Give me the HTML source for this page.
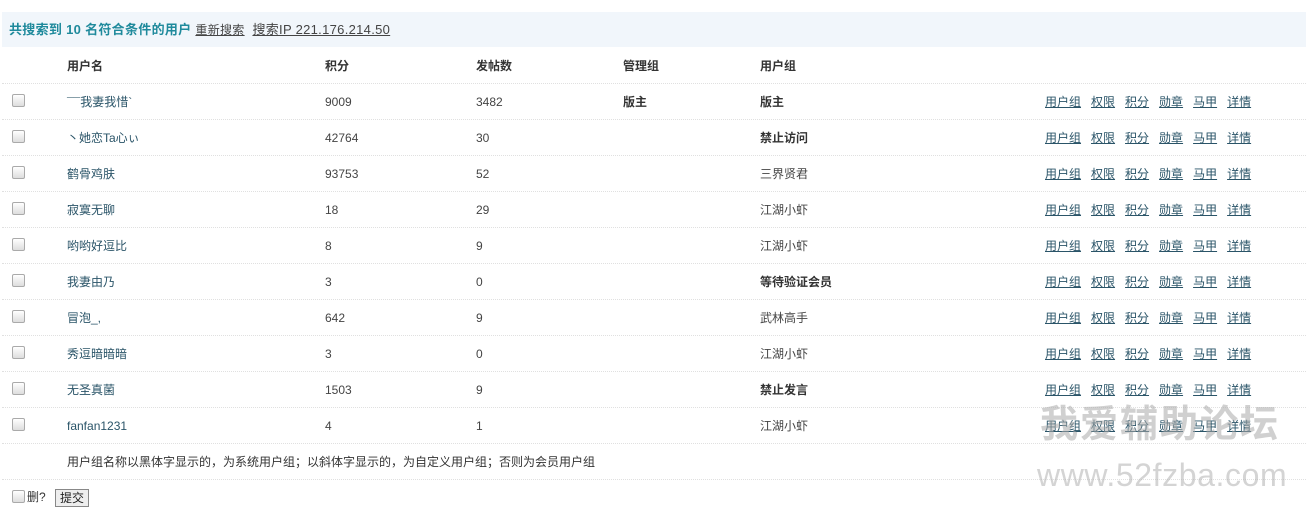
<!DOCTYPE html>
<html><head><meta charset="utf-8"><style>
body{margin:0;width:1306px;height:514px;background:#fff;font-family:"Liberation Sans","Noto Sans CJK SC",sans-serif;font-size:12px;color:#444;position:relative;overflow:hidden}
.a{position:absolute;white-space:nowrap;line-height:14px}
.hd{position:absolute;left:2px;top:12px;width:1304px;height:35px;background:#f1f6fb}
.ln{position:absolute;left:2px;width:1304px;height:0;border-top:1px dotted #e0e0e0}
.cb{position:absolute;left:12px;width:11px;height:11px;border:1px solid #aaa;border-radius:2px;background:linear-gradient(#fff,#ddd)}
.nm{color:#2a5468}
b{color:#333}
.act a{color:#2a5468;text-decoration:underline;margin-right:10px}
</style></head><body>
<div class="hd"></div>
<div class="a" style="left:9px;top:22px;font-size:13px;line-height:16px;letter-spacing:0.3px"><b style="color:#1f8a9c">共搜索到 10 名符合条件的用户</b> <span style="text-decoration:underline;color:#444;font-size:12px">重新搜索</span> &nbsp;<span style="text-decoration:underline;color:#444">搜索IP 221.176.214.50</span></div>
<div class="a" style="left:67px;top:59px"><b>用户名</b></div>
<div class="a" style="left:325px;top:59px"><b>积分</b></div>
<div class="a" style="left:476px;top:59px"><b>发帖数</b></div>
<div class="a" style="left:623px;top:59px"><b>管理组</b></div>
<div class="a" style="left:760px;top:59px"><b>用户组</b></div>
<div class="ln" style="top:83px"></div>
<div id="rows"></div>
<script>
var d=[["¯¯我妻我惜`","9009","3482","<b>版主</b>","<b>版主</b>"],
["丶她恋Ta心ぃ","42764","30","","<b>禁止访问</b>"],
["鹤骨鸡肤","93753","52","","三界贤君"],
["寂寞无聊","18","29","","江湖小虾"],
["哟哟好逗比","8","9","","江湖小虾"],
["我妻由乃","3","0","","<b>等待验证会员</b>"],
["冒泡_,","642","9","","武林高手"],
["秀逗暗暗暗","3","0","","江湖小虾"],
["无圣真菌","1503","9","","<b>禁止发言</b>"],
["fanfan1231","4","1","","江湖小虾"]];
var h="";
d.forEach(function(r,i){var y=84+i*36;var t=y+11;
h+='<div class="cb" style="top:'+(y+10)+'px"></div>';
h+='<div class="a nm" style="left:67px;top:'+t+'px">'+r[0]+'</div>';
h+='<div class="a" style="left:325px;top:'+t+'px">'+r[1]+'</div>';
h+='<div class="a" style="left:476px;top:'+t+'px">'+r[2]+'</div>';
h+='<div class="a" style="left:623px;top:'+t+'px">'+r[3]+'</div>';
h+='<div class="a" style="left:760px;top:'+t+'px">'+r[4]+'</div>';
h+='<div class="a act" style="left:1045px;top:'+t+'px"><a>用户组</a><a>权限</a><a>积分</a><a>勋章</a><a>马甲</a><a>详情</a></div>';
h+='<div class="ln" style="top:'+(y+35)+'px"></div>';});
document.getElementById("rows").innerHTML=h;
</script>
<div class="a" style="left:67px;top:455px;color:#333">用户组名称以黑体字显示的，为系统用户组；以斜体字显示的，为自定义用户组；否则为会员用户组</div>
<div class="ln" style="top:479px"></div>
<div class="cb" style="top:490px"></div>
<div class="a" style="left:27px;top:490px;color:#333">删?</div>
<div class="a" style="left:55px;top:489px;border:1px solid #888;background:#eee;padding:1px 4px;color:#222">提交</div>
<div class="a" style="left:1040px;top:404px;font-size:38px;line-height:42px;font-weight:bold;color:rgba(170,170,170,0.55);letter-spacing:2px">我爱辅助论坛</div>
<div class="a" style="left:1037px;top:458px;font-size:32px;line-height:34px;color:rgba(170,170,170,0.5);letter-spacing:0.6px">www.52fzba.com</div>
</body></html>
